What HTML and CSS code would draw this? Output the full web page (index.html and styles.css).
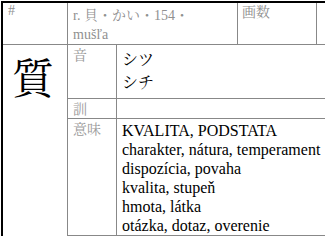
FILE: index.html
```html
<!DOCTYPE html>
<html>
<head>
<meta charset="utf-8">
<link rel="stylesheet" href="styles.css">
</head>
<body>
<div class="sheet">
  <div class="head">
    <div class="cell hash">#</div>
    <div class="cell radical">r. <span class="cjk">貝・かい・</span>154<span class="cjk">・</span><br>mušľa</div>
    <div class="cell strokes">画数</div>
    <div class="cell extra"></div>
  </div>
  <div class="main">
    <div class="kanji">質</div>
    <div class="rows">
      <div class="row">
        <div class="label">音</div>
        <div class="value readings">
          <div>シツ</div>
          <div>シチ</div>
        </div>
      </div>
      <div class="row">
        <div class="label">訓</div>
        <div class="value"></div>
      </div>
      <div class="row">
        <div class="label">意味</div>
        <div class="value meanings">
          <div>KVALITA, PODSTATA</div>
          <div>charakter, nátura, temperament</div>
          <div>dispozícia, povaha</div>
          <div>kvalita, stupeň</div>
          <div>hmota, látka</div>
          <div>otázka, dotaz, overenie</div>
        </div>
      </div>
    </div>
  </div>
</div>
</body>
</html>
```
FILE: styles.css
```css
html, body {
  margin: 0;
  padding: 0;
  height: 248px;
  overflow: hidden;
  background: #fff;
}

body {
  font-family: "Liberation Serif", "Noto Serif CJK JP", serif;
  color: #000;
}

.sheet {
  margin: 1px 0 0 1px;
  width: 440px;
  border-top: 2px solid #000;
  border-left: 2px solid #000;
}

.head {
  display: grid;
  grid-template-columns: 65px 170px 79px 1fr;
  border-bottom: 1px solid #888;
}

.cell {
  box-sizing: border-box;
  border-right: 1px solid #888;
  font-size: 14px;
  color: #909090;
  padding: 0 5px;
}

.hash {
  line-height: 16px;
}

.radical {
  line-height: 19px;
  padding-top: 2px;
}

.cjk {
  font-family: "Noto Serif CJK JP", serif;
}

.strokes {
  font-family: "Noto Serif CJK JP", serif;
  line-height: 16px;
  padding-left: 4px;
}

.main {
  display: grid;
  grid-template-columns: 65px 1fr;
}

.kanji {
  border-right: 1px solid #888;
  font-family: "Noto Serif CJK JP", serif;
  font-size: 42px;
  line-height: 42px;
  text-align: center;
  padding: 10px 4px 0 0;
}

.row {
  display: grid;
  grid-template-columns: 49px 1fr;
  border-bottom: 1px solid #888;
}

.label {
  box-sizing: border-box;
  border-right: 1px solid #888;
  padding: 0 5px;
  font-family: "Noto Serif CJK JP", serif;
  font-size: 14px;
  line-height: 19px;
  color: #9a9a9a;
}

.value {
  padding: 2px 5px 0;
  font-size: 16px;
  line-height: 19px;
}

.readings {
  font-family: "Noto Serif CJK JP", serif;
  line-height: 23px;
  padding-bottom: 5px;
}
```
